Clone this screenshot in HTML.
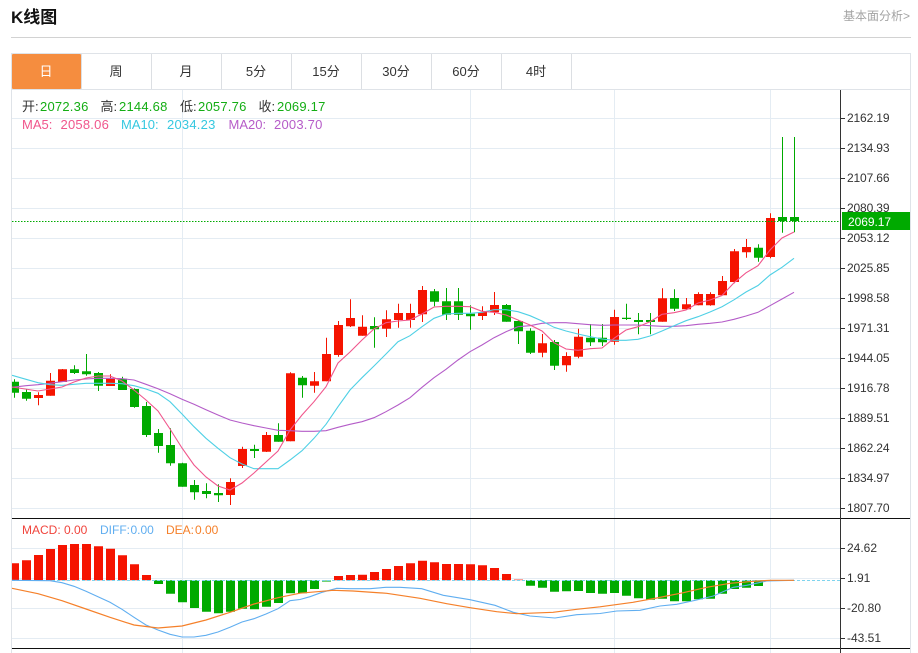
<!DOCTYPE html>
<html lang="zh"><head><meta charset="utf-8"><title>K线图</title>
<style>
html,body{margin:0;padding:0;background:#fff;width:918px;height:653px;overflow:hidden}
svg{display:block;font-family:"Liberation Sans","Noto Sans CJK SC",sans-serif}
</style></head><body>
<svg width="918" height="653" viewBox="0 0 918 653" xmlns="http://www.w3.org/2000/svg">
<defs>
<clipPath id="m"><rect x="12" y="90" width="828" height="428"/></clipPath>
<clipPath id="s"><rect x="12" y="519" width="828" height="129"/></clipPath>
</defs>

<text x="11" y="23" font-size="17" font-weight="bold" fill="#111">K线图</text>
<text x="843" y="20" font-size="12" fill="#a3a3a3">基本面分析&gt;</text>
<path d="M11 37.5H911" stroke="#d2d2d2" fill="none"/>

<!-- tabs -->
<path d="M11.5 89V53.5H910.5V653" stroke="#dfe3e8" fill="none"/>
<path d="M11.5 53.5V653" stroke="#dfe3e8" fill="none"/>
<path d="M12 89.5H910" stroke="#dfe3e8" fill="none"/>
<path d="M81.5 54V89M151.5 54V89M221.5 54V89M291.5 54V89M361.5 54V89M431.5 54V89M501.5 54V89M571.5 54V89" stroke="#dcdfe3" fill="none"/>
<rect x="12" y="54" width="69" height="35" rx="1" fill="#f58d3f"/>
<g font-size="13" text-anchor="middle" fill="#333">
<text x="46" y="76" fill="#fff">日</text>
<text x="116" y="76">周</text>
<text x="186" y="76">月</text>
<text x="256" y="76">5分</text>
<text x="326" y="76">15分</text>
<text x="396" y="76">30分</text>
<text x="466" y="76">60分</text>
<text x="536" y="76">4时</text>
</g>

<!-- grid -->
<path d="M12 118.5H840M12 148.5H840M12 178.5H840M12 208.5H840M12 238.5H840M12 268.5H840M12 298.5H840M12 328.5H840M12 358.5H840M12 388.5H840M12 418.5H840M12 448.5H840M12 478.5H840M12 508.5H840M12 548.5H840M12 578.5H840M12 608.5H840M12 638.5H840" stroke="#e4ecf3" fill="none"/>
<path d="M182.5 90V653M470.5 90V653M614.5 90V653M770.5 90V653" stroke="#e4ecf3" fill="none"/>

<!-- candles -->
<g clip-path="url(#m)">
<path fill="none" stroke="#f51400" d="M38.5 392.3V405.3M50.5 373V395.7M62.5 369V382M110.5 374.3V386M230.5 478.3V505M242.5 446.7V468M266.5 432V452M290.5 372.3V441.3M314.5 372V392.7M326.5 337.7V381.3M338.5 321V356.7M350.5 299.3V327M362.5 315.3V335.7M386.5 310.3V337M398.5 303.7V327.7M410.5 303.7V327.7M422.5 286V322M482.5 306.3V320M494.5 292V315M542.5 334V357.3M566.5 352.3V371.7M578.5 328.7V358.3M614.5 309.7V344.7M662.5 288.3V321.7M686.5 298V310M698.5 292.3V305.3M710.5 292.3V305.7M722.5 276V295.3M734.5 249V283.3M746.5 239V257.7M770.5 213.3V258.3"/>
<path fill="none" stroke="#00aa00" d="M14.5 379.3V397.7M26.5 389.3V400.7M74.5 365.3V374M86.5 354V375.7M98.5 372V391M122.5 376.7V390M134.5 388.3V407.7M146.5 402V437M158.5 429V452.7M170.5 428.3V465.7M182.5 462.7V486.7M194.5 480V499.7M206.5 483.3V498.3M218.5 484.3V502M254.5 444.7V458M278.5 423.3V441.7M302.5 376V397.7M374.5 317.3V347.7M434.5 289V306.3M446.5 288V320M458.5 288V320M470.5 305.3V329.7M506.5 304V321.7M518.5 320V344M530.5 328.3V354M554.5 340V370M590.5 324V346M602.5 324V346M626.5 303.7V320M638.5 313V334.3M650.5 313V334.3M674.5 289.3V311M758.5 244.3V261.7M782.5 137V232.7M794.5 137V232.3"/>
<path fill="#f51400" d="M34 395h9v3h-9zM46 380.7h9v15h-9zM58 369.3h9v12.7h-9zM106 378.7h9v7.3h-9zM226 482h9v13h-9zM238 449h9v17h-9zM262 435h9v16.7h-9zM286 373.3h9v68h-9zM310 381.3h9v4.4h-9zM322 354h9v27.3h-9zM334 325h9v30h-9zM346 318h9v8.3h-9zM358 326.7h9v9h-9zM382 319.3h9v9.4h-9zM394 313h9v7h-9zM406 313h9v7h-9zM418 290h9v24.3h-9zM478 312h9v4h-9zM490 305h9v7.3h-9zM538 343.3h9v9.4h-9zM562 356h9v9.3h-9zM574 336.7h9v20h-9zM610 317h9v24.7h-9zM658 298.3h9v23.4h-9zM682 304.3h9v5h-9zM694 294h9v11.3h-9zM706 294h9v11.3h-9zM718 281h9v14.3h-9zM730 251.3h9v30.7h-9zM742 247h9v5.3h-9zM766 218h9v39h-9z"/>
<path fill="#00aa00" d="M10 381.7h9v11h-9zM22 392h9v6.7h-9zM70 369.3h9v3.7h-9zM82 371.3h9v3h-9zM94 373h9v12.7h-9zM118 378.7h9v11.3h-9zM130 389h9v18h-9zM142 406h9v29h-9zM154 433h9v13h-9zM166 445h9v18.3h-9zM178 463.3h9v23.4h-9zM190 485h9v7.3h-9zM202 491h9v3h-9zM214 493h9v2.3h-9zM250 449h9v2h-9zM274 435h9v6.7h-9zM298 377.7h9v7.6h-9zM370 326h9v3.3h-9zM430 291.3h9v10.4h-9zM442 301.3h9v13.4h-9zM454 301.3h9v13.4h-9zM466 313.7h9v2.6h-9zM502 305h9v16.7h-9zM514 321h9v10.3h-9zM526 330.7h9v22h-9zM550 342h9v23.7h-9zM586 337.7h9v4.6h-9zM598 337.7h9v4.6h-9zM622 317.7h9v1.3h-9zM634 320h9v2h-9zM646 320h9v2h-9zM670 298h9v10.7h-9zM754 247.7h9v10h-9zM778 217h9v4h-9zM790 217h9v4h-9z"/>
<!-- MA lines -->
<polyline fill="none" stroke="#b45cc8" stroke-width="1.1" points="12,387.3 26,385.7 38,384.7 50,383.3 62,381.7 74,380 86,379 98,378.3 110,378.3 122,378.7 134,380 146,384.3 158,388.7 170,393.7 182,399.3 194,404.3 206,409.7 218,415 230,420 242,423 254,425.7 266,428 278,430.3 290,430.7 302,431.3 314,431.3 326,430.7 338,427.3 350,424.3 362,421.7 374,417.7 386,411.7 398,405 410,397.7 422,387.3 434,377.7 446,369.3 458,360 470,351.7 482,345 494,337.7 506,331.7 518,326.7 530,325.7 542,323.3 554,322.7 566,322.7 578,323.7 590,324.7 602,325.3 614,325 626,325 638,325 650,325.7 662,326.3 674,326.3 686,325.7 698,324.3 710,323.3 722,322 734,319.3 746,316 758,312.3 770,305.7 782,299 794,292.3"/>
<polyline fill="none" stroke="#4fd0e5" stroke-width="1.1" points="12,375.3 26,379.3 38,382.7 50,384.7 62,385.3 74,384.3 86,383.3 98,383.3 110,383.3 122,383.7 134,385.7 146,389 158,393.3 170,401.7 182,414 194,426.7 206,438.3 218,448.3 230,457.7 242,464 254,468.7 266,468.7 278,468.7 290,460 302,450.7 314,438.3 326,424.3 338,406.7 350,390 362,377.7 374,366 386,354 398,341.7 410,335.7 422,326.7 434,318.3 446,314 458,313.3 470,313.3 482,312.3 494,309.7 506,309.7 518,311.7 530,315.7 542,321 554,327.3 566,331 578,334 590,336.7 602,339 614,340.3 626,340.3 638,339.3 650,336 662,331 674,325.7 686,320.7 698,316.7 710,312 722,306.7 734,299.8 746,292 758,285.5 770,275 782,267.3 794,258.3"/>
<polyline fill="none" stroke="#f0568c" stroke-width="1.1" points="12,387 38,391 50,389 62,387 74,382 86,378 98,376 110,376 122,381 134,390 146,400 158,411 170,429 182,448 194,465 206,477 218,486 230,490 242,483 254,473 266,462 278,451 290,430 302,415 314,401.7 326,386.7 338,363 350,352 362,340 374,329 386,322.7 398,321 410,320 422,314 434,307 446,306.3 458,306.3 470,306.7 482,311.3 494,312.3 506,315 518,320 530,325 542,331 554,342.7 566,349 578,350.3 590,348.7 602,348 614,338.3 626,330 638,326.7 650,321.7 662,314.3 674,312.7 686,310 698,303 710,300 722,295.5 734,282.8 746,272.8 758,265.7 770,250 782,238 794,232"/>
</g>
<path d="M12 221.5H840" stroke="#00aa00" stroke-width="1" stroke-dasharray="1.5 1.5" fill="none"/>

<!-- MACD -->
<g clip-path="url(#s)">
<path fill="#f51400" d="M10 563.3h9v17h-9zM22 560.3h9v20h-9zM34 555h9v25.3h-9zM46 549h9v31.3h-9zM58 545h9v35.3h-9zM70 544h9v36.3h-9zM82 544h9v36.3h-9zM94 546.3h9v34h-9zM106 548.7h9v31.6h-9zM118 555.3h9v25h-9zM130 564.3h9v16h-9zM142 575h9v5.3h-9zM334 576h9v4.3h-9zM346 575h9v5.3h-9zM358 574.7h9v5.6h-9zM370 572h9v8.3h-9zM382 569h9v11.3h-9zM394 566h9v14.3h-9zM406 563.3h9v17h-9zM418 560.7h9v19.6h-9zM430 562.3h9v18h-9zM442 564h9v16.3h-9zM454 564h9v16.3h-9zM466 564.3h9v16h-9zM478 565.3h9v15h-9zM490 568h9v12.3h-9zM502 574h9v6.3h-9z"/>
<path fill="#f51400" opacity=".5" d="M514 579.2h9v1.1h-9z"/>
<path fill="#00aa00" d="M154 580.3h9v3.7h-9zM166 580.3h9v13.4h-9zM178 580.3h9v22h-9zM190 580.3h9v27.7h-9zM202 580.3h9v31.4h-9zM214 580.3h9v33h-9zM226 580.3h9v31.4h-9zM238 580.3h9v28.4h-9zM250 580.3h9v29h-9zM262 580.3h9v26.4h-9zM274 580.3h9v22.7h-9zM286 580.3h9v13h-9zM298 580.3h9v13h-9zM310 580.3h9v8.7h-9zM526 580.3h9v5.4h-9zM538 580.3h9v7.4h-9zM550 580.3h9v11.4h-9zM562 580.3h9v11h-9zM574 580.3h9v10.7h-9zM586 580.3h9v12.7h-9zM598 580.3h9v13.4h-9zM610 580.3h9v12.7h-9zM622 580.3h9v15.4h-9zM634 580.3h9v18h-9zM646 580.3h9v19.4h-9zM658 580.3h9v18.4h-9zM670 580.3h9v21h-9zM682 580.3h9v21h-9zM694 580.3h9v19h-9zM706 580.3h9v18.4h-9zM718 580.3h9v13.4h-9zM730 580.3h9v8.7h-9zM742 580.3h9v7.4h-9zM754 580.3h9v5.7h-9z"/>
<path fill="#00aa00" opacity=".55" d="M322 580.3h9v1.7h-9z"/>
<path d="M12 580.5H840" stroke="#7fd4ee" stroke-dasharray="3 2" fill="none"/>
<polyline fill="none" stroke="#60aef0" stroke-width="1.1" points="12,580.3 50,580.7 62,582.7 74,586.3 86,591.3 98,596.7 110,602.3 122,609.3 134,617.3 146,625 158,630 170,634.3 182,637 194,637 206,635.3 218,632 230,627.3 242,622 254,618.7 266,614 278,608.7 290,600.7 300,599.5 310,596.7 322,592.3 336.7,588.3 350,588.7 370,588.7 386,587.3 400,587.3 421.7,588.7 443.3,595.3 470,599.7 495,605.3 513.3,612.3 530,616 555,618 576.7,614.7 600,613.5 616.7,611 640,610.3 660,606 676.7,604.3 696.7,600 713.3,596 733.3,587.3 746.7,585.3 766.7,581 794,580.3"/>
<polyline fill="none" stroke="#f5802a" stroke-width="1.2" points="12,588.3 38,593.7 62,600.7 86,609 110,617.3 134,625 158,628 182,626 206,620 230,612.3 254,604 278,597.7 300,593.2 333.3,590.3 353,591 386.7,593.3 420,598.3 446.7,603.7 470,607.7 496.7,611.7 516.7,613.7 553,612.3 576.7,609.3 600,606.8 633,602.3 656.7,598 683.3,592.7 706.7,587.3 730,583.3 753.3,581.3 770,580.3 794,580.3"/>
</g>

<!-- frame lines -->
<path d="M12 518.5H910M12 648.5H910" stroke="#111" fill="none"/>
<path d="M840.5 90V653" stroke="#333" fill="none"/>
<path d="M841 118.5h4M841 148.5h4M841 178.5h4M841 208.5h4M841 238.5h4M841 268.5h4M841 298.5h4M841 328.5h4M841 358.5h4M841 388.5h4M841 418.5h4M841 448.5h4M841 478.5h4M841 508.5h4M841 548.5h4M841 578.5h4M841 608.5h4M841 638.5h4" stroke="#333" fill="none"/>

<!-- axis labels -->
<g font-size="12" fill="#333">
<text x="847" y="122" textLength="42.5">2162.19</text>
<text x="847" y="152" textLength="42.5">2134.93</text>
<text x="847" y="182" textLength="42.5">2107.66</text>
<text x="847" y="212" textLength="42.5">2080.39</text>
<text x="847" y="242" textLength="42.5">2053.12</text>
<text x="847" y="272" textLength="42.5">2025.85</text>
<text x="847" y="302" textLength="42.5">1998.58</text>
<text x="847" y="332" textLength="42.5">1971.31</text>
<text x="847" y="362" textLength="42.5">1944.05</text>
<text x="847" y="392" textLength="42.5">1916.78</text>
<text x="847" y="422" textLength="42.5">1889.51</text>
<text x="847" y="452" textLength="42.5">1862.24</text>
<text x="847" y="482" textLength="42.5">1834.97</text>
<text x="847" y="512" textLength="42.5">1807.70</text>
<text x="847" y="552">24.62</text>
<text x="847" y="582">1.91</text>
<text x="847" y="612">-20.80</text>
<text x="847" y="642">-43.51</text>
</g>
<rect x="842" y="212" width="68" height="18" fill="#00aa00"/>
<text x="848" y="226" font-size="12" fill="#fff" textLength="43">2069.17</text>

<!-- legends -->
<g font-size="13">
<text x="22" y="111" fill="#333">开:</text><text x="40" y="111" fill="#14ad14" textLength="48.3">2072.36</text>
<text x="100.5" y="111" fill="#333">高:</text><text x="119" y="111" fill="#14ad14" textLength="48.3">2144.68</text>
<text x="180" y="111" fill="#333">低:</text><text x="198" y="111" fill="#14ad14" textLength="48.3">2057.76</text>
<text x="258.5" y="111" fill="#333">收:</text><text x="277" y="111" fill="#14ad14" textLength="48.3">2069.17</text>
<text x="22" y="129" fill="#f0568c">MA5:</text><text x="60.5" y="129" fill="#f0568c" textLength="48.3">2058.06</text>
<text x="121" y="129" fill="#36c8e0">MA10:</text><text x="167" y="129" fill="#36c8e0" textLength="48.3">2034.23</text>
<text x="228.5" y="129" fill="#b65cc8">MA20:</text><text x="274" y="129" fill="#b65cc8" textLength="48.3">2003.70</text>
</g>
<g font-size="12">
<text x="22" y="534" fill="#f0443c">MACD:</text><text x="64" y="534" fill="#f0443c">0.00</text>
<text x="100" y="534" fill="#60aef0">DIFF:</text><text x="130.5" y="534" fill="#60aef0">0.00</text>
<text x="166" y="534" fill="#f5802a">DEA:</text><text x="195" y="534" fill="#f5802a">0.00</text>
</g>
</svg>
</body></html>
